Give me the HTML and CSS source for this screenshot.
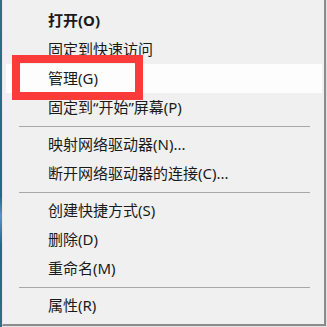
FILE: index.html
```html
<!DOCTYPE html>
<html lang="zh-CN">
<head>
    <meta charset="UTF-8">
    <meta name="viewport" content="width=device-width, initial-scale=1.0">
    <title>右键菜单</title>
    <link rel="stylesheet" href="styles.css">
</head>
<body>

<!-- 桌面背景的边缘 -->
<div class="desktop"></div>

<!-- 右键菜单 -->
<div class="menu">
    <div class="item bold">打开(O)</div>
    <div class="item">固定到快速访问</div>
    <div class="item active">管理(G)</div>
    <div class="item">固定到“开始”屏幕(P)</div>
    <div class="sep"></div>
    <div class="item">映射网络驱动器(N)...</div>
    <div class="item">断开网络驱动器的连接(C)...</div>
    <div class="sep"></div>
    <div class="item">创建快捷方式(S)</div>
    <div class="item">删除(D)</div>
    <div class="item">重命名(M)</div>
    <div class="sep"></div>
    <div class="item">属性(R)</div>

    <!-- 标注框 -->
    <div class="mark"></div>
</div>

<div class="rest"></div>

</body>
</html>
```

FILE: styles.css
```css
body {
    margin: 0;
    padding: 0;
    width: 327px;
    height: 327px;
    display: flex;
    align-items: flex-start;
    background-color: #e4e4e4;
    font-family: "Noto Sans", "Noto Sans CJK SC", sans-serif;
    overflow: hidden;
}

/* 左边露出的桌面 */
.desktop {
    width: 2px;
    height: 327px;
    background: linear-gradient(#2c6f86, #1d6b8a 60%, #5a8fd0 66%, #1d6b8a 75%, #2c6f86);
}

/* 菜单 */
.menu {
    position: relative;
    width: 319px;
    padding: 6px 2px 4px 0;
    background-color: #f0f0f0;
    border-left: 1px solid #e8e8e8;
    border-right: 2px solid #8c8c8c;
    border-bottom: 2px solid #8c8c8c;
    color: #1a1a1a;
}

.rest {
    flex: 1;
    height: 327px;
    background-color: #dedede;
}

.item {
    height: 29px;
    line-height: 29px;
    margin-left: 3px;
    padding-left: 42px;
    font-size: 15px;
    white-space: nowrap;
}

.item.bold {
    font-weight: bold;
}

.item.active {
    background-color: #fdfdfd;
}

.sep {
    height: 8px;
    margin: 0 12px 0 16px;
    display: flex;
    align-items: center;
}

.sep::after {
    content: "";
    flex: 1;
    height: 1px;
    background-color: #a8a8a8;
}

/* 红色标注框 */
.mark {
    position: absolute;
    left: 9px;
    top: 55px;
    width: 115px;
    height: 29px;
    border: 8px solid #fb3a3a;
}
```
